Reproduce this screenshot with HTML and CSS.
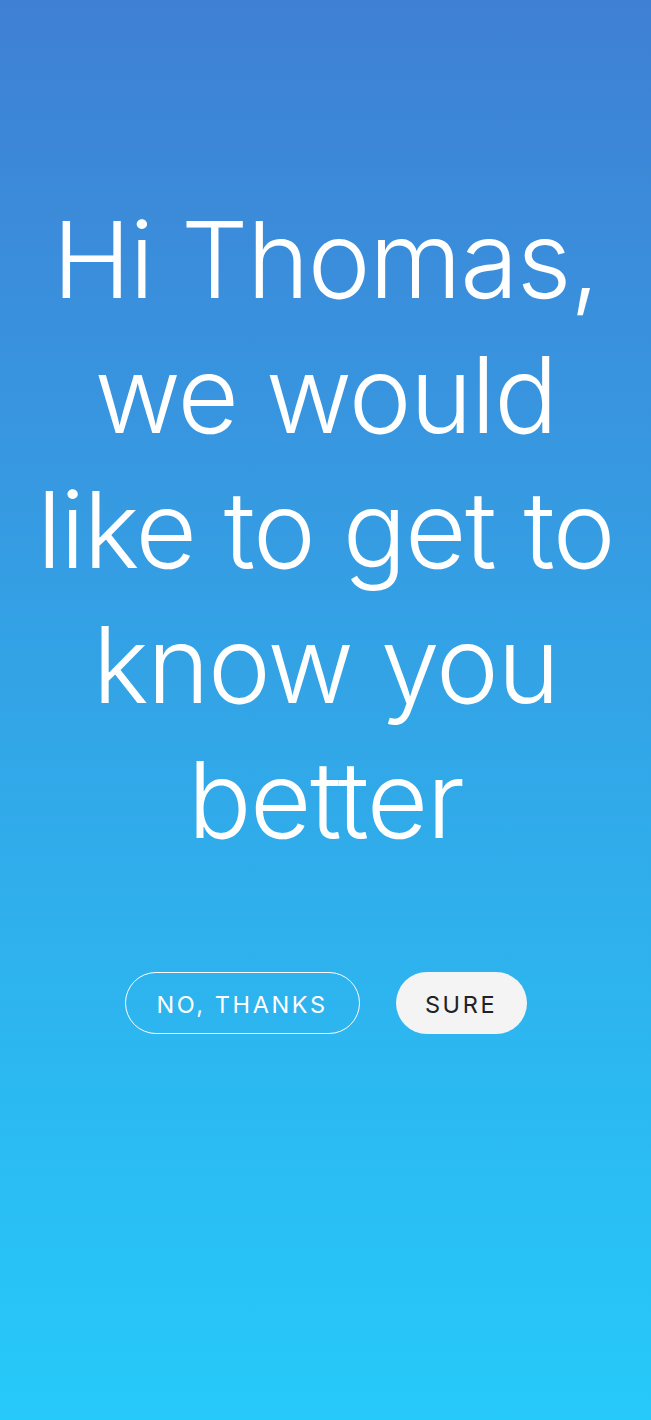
FILE: index.html
```html
<!DOCTYPE html>
<html lang="en">
<head>
<meta charset="utf-8">
<title>Welcome</title>
<link rel="stylesheet" href="styles.css">
</head>
<body>
<main class="screen">
  <h1 class="greeting">Hi Thomas, we would like to get to know you better</h1>
  <div class="actions">
    <button class="btn btn-outline" type="button">NO, THANKS</button>
    <button class="btn btn-solid" type="button">SURE</button>
  </div>
</main>
</body>
</html>
```
FILE: styles.css
```css
html, body {
  margin: 0;
  padding: 0;
}
body {
  font-family: Inter, "Noto Sans", sans-serif;
}
.screen {
  box-sizing: border-box;
  width: 651px;
  height: 1420px;
  background: linear-gradient(180deg, #3f80d4 0%, #26cafa 100%);
  padding-top: 192px;
  display: flex;
  flex-direction: column;
  align-items: center;
}
.greeting {
  margin: 0;
  width: 620px;
  text-align: center;
  color: #fff;
  font-weight: 300;
  font-size: 106px;
  line-height: 135px;
  letter-spacing: -1.5px;
}
.actions {
  margin-top: 105px;
  display: flex;
  gap: 36px;
}
.btn {
  box-sizing: border-box;
  height: 62px;
  border-radius: 31px;
  font-family: Inter, "Noto Sans", sans-serif;
  font-size: 23.5px;
  font-weight: 400;
  letter-spacing: 2.6px;
  padding: 2px 0 0;
  cursor: pointer;
}
.btn-outline {
  width: 235px;
  background: transparent;
  border: 1.5px solid #fff;
  color: #fff;
}
.btn-solid {
  width: 131px;
  background: #f4f4f4;
  border: none;
  color: #222;
}
```
